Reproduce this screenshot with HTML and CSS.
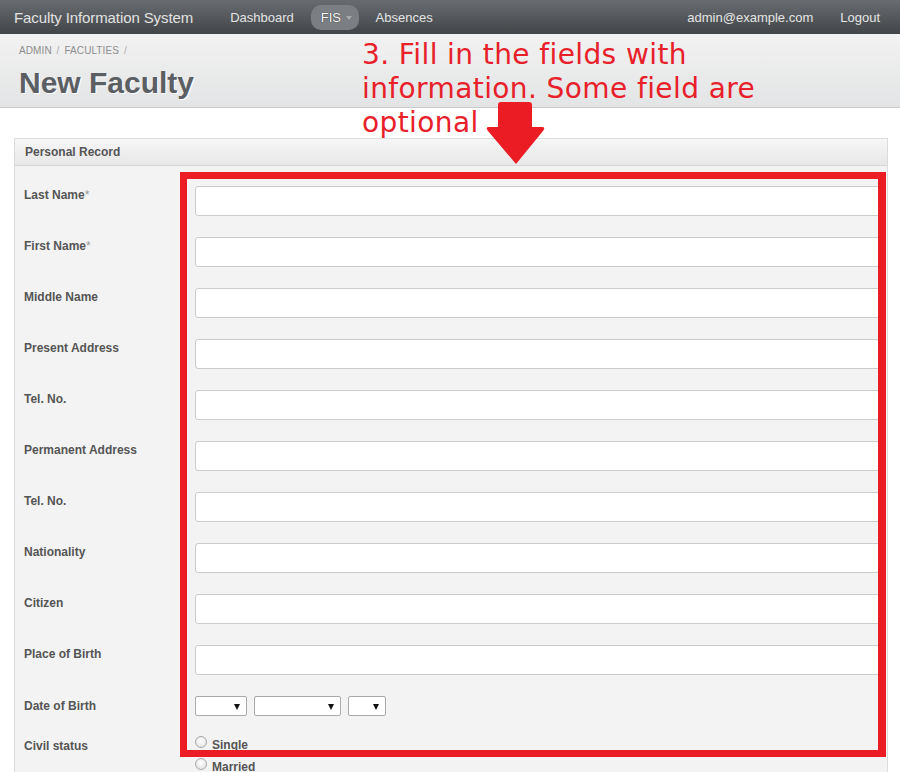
FILE: index.html
```html
<!DOCTYPE html>
<html>
<head>
<meta charset="utf-8">
<link rel="stylesheet" href="styles.css">
</head>
<body>
<div class="navbar">
  <div class="brand">Faculty Information System</div>
  <ul class="nav">
    <li class="nav-item">Dashboard</li>
    <li class="nav-item active">FIS <span class="caret"></span></li>
    <li class="nav-item">Absences</li>
  </ul>
  <ul class="nav nav-right">
    <li class="nav-item">admin@example.com</li>
    <li class="nav-item">Logout</li>
  </ul>
</div>
<div class="page-header">
  <div class="breadcrumb">ADMIN <span class="sep">/</span> FACULTIES <span class="sep">/</span></div>
  <h1 class="title">New Faculty</h1>
</div>
<div class="content">
  <div class="panel">
    <div class="panel-heading">Personal Record</div>
    <div class="panel-body">
      <div class="form-row"><label class="lbl">Last Name<span class="req">*</span></label><input class="field" type="text"></div>
      <div class="form-row"><label class="lbl">First Name<span class="req">*</span></label><input class="field" type="text"></div>
      <div class="form-row"><label class="lbl">Middle Name</label><input class="field" type="text"></div>
      <div class="form-row"><label class="lbl">Present Address</label><input class="field" type="text"></div>
      <div class="form-row"><label class="lbl">Tel. No.</label><input class="field" type="text"></div>
      <div class="form-row"><label class="lbl">Permanent Address</label><input class="field" type="text"></div>
      <div class="form-row"><label class="lbl">Tel. No.</label><input class="field" type="text"></div>
      <div class="form-row"><label class="lbl">Nationality</label><input class="field" type="text"></div>
      <div class="form-row"><label class="lbl">Citizen</label><input class="field" type="text"></div>
      <div class="form-row"><label class="lbl">Place of Birth</label><input class="field" type="text"></div>
      <div class="form-row row-date"><label class="lbl">Date of Birth</label>
        <div class="selects">
          <div class="sel sel-a"><span class="tri"></span></div>
          <div class="sel sel-b"><span class="tri"></span></div>
          <div class="sel sel-c"><span class="tri"></span></div>
        </div>
      </div>
      <div class="form-row row-civil"><label class="lbl">Civil status</label>
        <div class="radios">
          <div class="radio"><span class="dot"></span>Single</div>
          <div class="radio"><span class="dot"></span>Married</div>
        </div>
      </div>
    </div>
  </div>
</div>
<div class="annot-text">3. Fill in the fields with information. Some field are optional</div>
<svg class="annot-arrow" width="64" height="66" viewBox="0 0 64 66">
  <path d="M17 1 H45 Q48 1 48 4 V26 H58 Q62 26 59 30 L32 63 L4 30 Q1 26 5 26 H14 V4 Q14 1 17 1 Z" fill="#ec1c24"/>
</svg>
<div class="annot-box"></div>
</body>
</html>
```
FILE: styles.css
```css
html, body {
  margin: 0;
  padding: 0;
}
body {
  width: 900px;
  height: 772px;
  overflow: hidden;
  background: #fff;
  font-family: "Liberation Sans", Arial, sans-serif;
  position: relative;
}
.navbar {
  height: 34px;
  background: linear-gradient(#686c70, #424548);
  display: flex;
  align-items: center;
  padding: 0 0 0 14px;
  box-sizing: border-box;
}
.brand {
  color: #e2e2e2;
  font-size: 15px;
  margin-right: 29px;
  letter-spacing: -0.1px;
}
.nav {
  list-style: none;
  margin: 0;
  padding: 0;
  display: flex;
  align-items: center;
  gap: 9px;
}
.nav-item {
  color: #e4e4e4;
  font-size: 13px;
  padding: 0 8px;
  height: 25px;
  line-height: 25px;
  border-radius: 10px;
}
.nav-item.active {
  background: #7b7f84;
  color: #fff;
  padding: 0 7px 0 10px;
  text-shadow: 0 0 1px #000;
}
.caret {
  display: inline-block;
  width: 0;
  height: 0;
  border-left: 3.5px solid transparent;
  border-right: 3.5px solid transparent;
  border-top: 4px solid #aaa;
  vertical-align: middle;
  margin-left: 1px;
}
.nav-right {
  margin-left: auto;
  margin-right: 12px;
  gap: 11px;
}
.page-header {
  height: 74px;
  background: linear-gradient(#f2f2f2, #e3e4e5);
  border-bottom: 1px solid #c9c9c9;
  padding: 10px 0 0 19px;
  box-sizing: border-box;
}
.breadcrumb {
  font-size: 10px;
  color: #8e8e8e;
  letter-spacing: 0.1px;
  line-height: 13px;
}
.sep { color: #aaa; margin: 0 2px; }
.title {
  margin: 9px 0 0 0;
  font-size: 30px;
  font-weight: bold;
  color: #5b5f63;
  text-shadow: 1px 1px 0 #fff;
  line-height: 34px;
}
.content {
  padding: 30px 12px 0 14px;
}
.panel {
  border: 1px solid #dcdcdc;
  background: #f3f3f3;
}
.panel-heading {
  height: 26px;
  line-height: 27px;
  background: linear-gradient(#f6f6f6, #e7e7e7);
  border-bottom: 1px solid #d6d6d6;
  font-size: 12px;
  font-weight: bold;
  color: #555;
  padding-left: 10px;
}
.panel-body {
  padding: 20px 7px 0 9px;
}
.form-row {
  display: grid;
  grid-template-columns: 171px 1fr;
  margin-bottom: 21px;
}
.lbl {
  font-size: 12px;
  font-weight: bold;
  color: #555;
  line-height: 17px;
  padding-top: 1px;
}
.req { color: #999; font-weight: normal; }
.field {
  height: 30px;
  box-sizing: border-box;
  border: 1px solid #cccccc;
  border-radius: 3px;
  background: #fff;
  margin: 0;
  padding: 0 6px;
  width: 100%;
}
.row-date { margin-bottom: 20px; }
.row-date .lbl { line-height: 19px; }
.selects {
  display: flex;
  gap: 7px;
}
.sel {
  height: 20px;
  box-sizing: border-box;
  border: 1px solid #aaa;
  border-radius: 2px;
  background: #fff;
  position: relative;
}
.sel-a { width: 52px; }
.sel-b { width: 87px; }
.sel-c { width: 38px; }
.tri {
  position: absolute;
  right: 6px;
  top: 7px;
  width: 0;
  height: 0;
  border-left: 3.5px solid transparent;
  border-right: 3.5px solid transparent;
  border-top: 6px solid #111;
}
.row-civil .lbl { line-height: 18px; }
.radios {
  display: flex;
  flex-direction: column;
  gap: 4px;
}
.radio {
  font-size: 12px;
  font-weight: bold;
  color: #555;
  line-height: 18px;
  display: flex;
  align-items: center;
}
.dot {
  width: 12px;
  height: 12px;
  border-radius: 50%;
  border: 1px solid #aaa;
  background: radial-gradient(circle at 50% 40%, #fff, #ddd);
  box-sizing: border-box;
  margin-right: 5px;
  margin-top: -6px;
}
.annot-text {
  position: absolute;
  left: 362px;
  top: 38px;
  width: 440px;
  font-family: "DejaVu Sans", Verdana, sans-serif;
  font-size: 28px;
  letter-spacing: 0.4px;
  line-height: 34px;
  color: #e8202a;
}
.annot-arrow {
  position: absolute;
  left: 484px;
  top: 101px;
}
.annot-box {
  position: absolute;
  left: 180px;
  top: 172px;
  width: 706px;
  height: 585px;
  box-sizing: border-box;
  border: 7px solid #ec1c24;
  border-right-width: 8px;
}
```
